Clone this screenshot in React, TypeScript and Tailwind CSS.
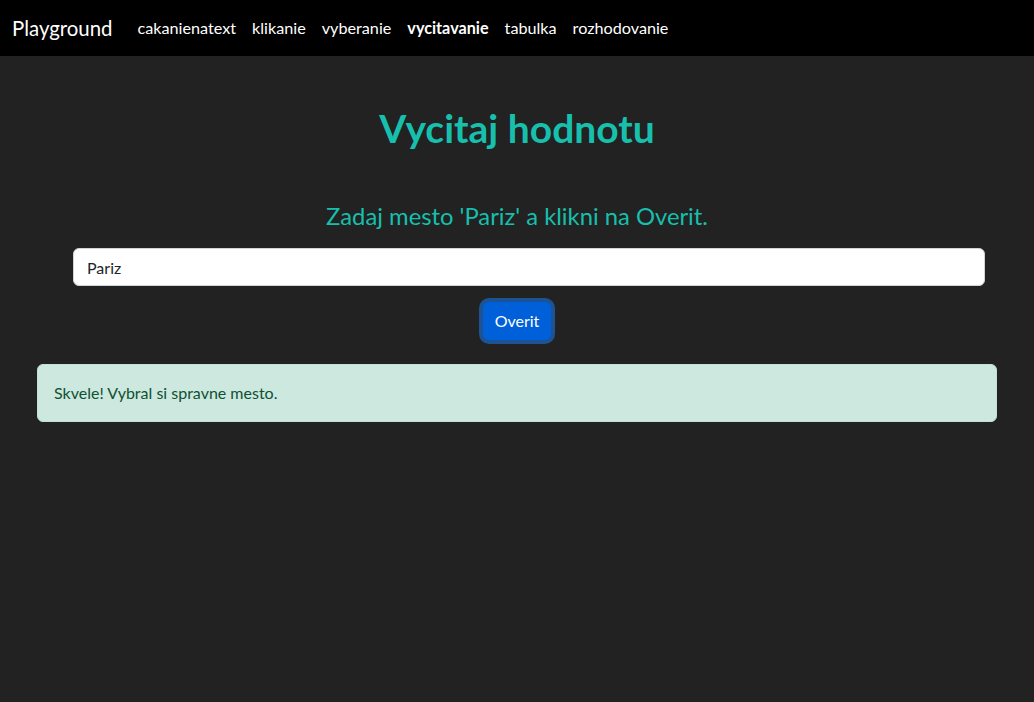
import React from "react";

export default function App() {
  const links = ["cakanienatext", "klikanie", "vyberanie", "vycitavanie", "tabulka", "rozhodovanie"];
  return (
    <div className="min-h-[702px] bg-[#222222]" style={{ fontFamily: "Lato, 'Noto Sans', sans-serif" }}>
      <nav className="h-14 bg-black flex items-center pl-3">
        <span className="text-white text-[20.4px] mr-[17px]">Playground</span>
        <div className="flex items-center">
          {links.map((l) => (
            <span
              key={l}
              className={`px-2 text-[16.2px] text-white ${l === "vycitavanie" ? "font-bold" : ""}`}
            >
              {l}
            </span>
          ))}
        </div>
      </nav>
      <main className="w-[960px] ml-[37px]">
        <h1 className="mt-12 text-center text-[39px] leading-[48px] font-bold text-[#17bfad]">Vycitaj hodnotu</h1>
        <h3 className="mt-[50px] text-center text-[23.8px] leading-[29px] text-[#17bfad]">Zadaj mesto 'Pariz' a klikni na Overit.</h3>
        <div className="mt-[17px] pl-[36px] pr-[12px]">
          <input
            readOnly
            value="Pariz"
            className="w-full h-[38px] bg-white rounded-[6px] border border-[#ced4da] px-[13px] text-[16px] text-[#212529] outline-none"
          />
        </div>
        <div className="flex justify-center mt-4">
          <button className="h-[38px] px-3 rounded-[6px] bg-[#0060d9] text-white text-[16px] shadow-[0_0_0_4px_#1b5394]">
            Overit
          </button>
        </div>
        <div className="mt-6 rounded-[6px] bg-[#cde8df] border border-[#c2e0d6] px-4 py-4 text-[16px] leading-6 text-[#0f5132]">
          Skvele! Vybral si spravne mesto.
        </div>
      </main>
    </div>
  );
}
